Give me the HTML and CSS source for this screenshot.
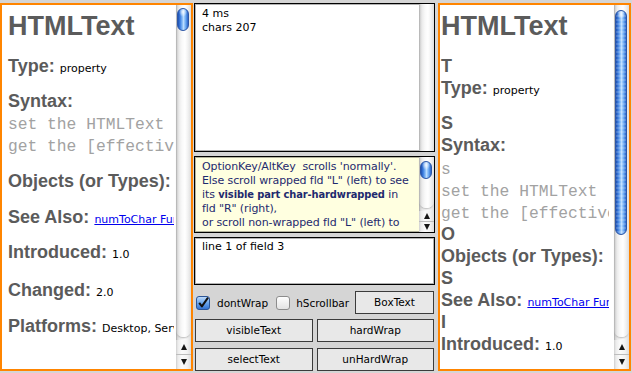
FILE: index.html
```html
<!DOCTYPE html>
<html>
<head>
<meta charset="utf-8">
<title>HTMLText</title>
<link rel="stylesheet" href="styles.css">
</head>
<body>
<div class="win">
  <section class="panel left">
    <div class="doc">
      <div class="title">HTMLText</div>
      <div class="ln g13">Type: <span class="v">property</span></div>
      <div class="ln g13">Syntax:</div>
      <div class="ln mono">set the HTMLText of object to htmlString</div>
      <div class="ln mono">get the [effective] HTMLText of object</div>
      <div class="ln g14">Objects (or Types):</div>
      <div class="ln g14">See Also: <span class="lk">numToChar Function</span></div>
      <div class="ln g13">Introduced: <span class="v">1.0</span></div>
      <div class="ln g16">Changed: <span class="v">2.0</span></div>
      <div class="ln g14">Platforms: <span class="v">Desktop, Server</span></div>
    </div>
    <div class="vsb">
      <div class="trk"><div class="thumb t-left"></div></div>
      <div class="arrows"><span class="up"></span><span class="dn"></span></div>
    </div>
  </section>

  <div class="center">
    <div class="fld top">
      <div class="ftext">4 ms<br>chars 207</div>
      <div class="vsb off"><div class="trk"></div></div>
    </div>
    <div class="fld note">
      <div class="ftext">OptionKey/AltKey&nbsp; scrolls 'normally'.<br>Else scroll wrapped fld "L" (left) to see<br>its <b>visible part char-hardwrapped</b> in<br>fld "R" (right),<br>or scroll non-wrapped fld "L" (left) to</div>
      <div class="vsb">
        <div class="trk"><div class="thumb t-note"></div></div>
        <div class="arrows small"><span class="up"></span><span class="dn"></span></div>
      </div>
    </div>
    <div class="fld f3">
      <div class="ftext">line 1 of field 3</div>
    </div>
    <div class="checkrow">
      <svg class="cb" width="14" height="14" viewBox="0 0 14 14">
        <defs>
          <linearGradient id="cbOn" x1="0" y1="0" x2="0" y2="1">
            <stop offset="0" stop-color="#c4defa"/>
            <stop offset="0.5" stop-color="#6aa6ec"/>
            <stop offset="1" stop-color="#2e6fd2"/>
          </linearGradient>
        </defs>
        <rect x="0.5" y="0.5" width="13" height="13" rx="2.5" fill="url(#cbOn)" stroke="#2b5597"/>
        <path d="M3.2 6.8 L5.9 10.4 L12 1.6" fill="none" stroke="#111" stroke-width="2" stroke-linejoin="round"/>
      </svg>
      <span class="lbl l1">dontWrap</span>
      <svg class="cb c2" width="14" height="14" viewBox="0 0 14 14">
        <defs>
          <linearGradient id="cbOff" x1="0" y1="0" x2="0" y2="1">
            <stop offset="0" stop-color="#ffffff"/>
            <stop offset="1" stop-color="#e2e2e2"/>
          </linearGradient>
        </defs>
        <rect x="0.5" y="0.5" width="13" height="13" rx="2.5" fill="url(#cbOff)" stroke="#8c8c8c"/>
      </svg>
      <span class="lbl l2">hScrollbar</span>
      <div class="btn boxtext">BoxText</div>
    </div>
    <div class="btnrow r1">
      <div class="btn">visibleText</div>
      <div class="btn">hardWrap</div>
    </div>
    <div class="btnrow r2">
      <div class="btn">selectText</div>
      <div class="btn">unHardWrap</div>
    </div>
  </div>

  <section class="panel right">
    <div class="doc">
      <div class="title">HTMLText</div>
      <div class="ln g13">T</div>
      <div class="ln">Type: <span class="v">property</span></div>
      <div class="ln g13">S</div>
      <div class="ln">Syntax:</div>
      <div class="ln mono g1">s</div>
      <div class="ln mono">set the HTMLText</div>
      <div class="ln mono">get the [effective]</div>
      <div class="ln">O</div>
      <div class="ln">Objects (or Types):</div>
      <div class="ln">S</div>
      <div class="ln">See Also: <span class="lk">numToChar Function</span></div>
      <div class="ln">I</div>
      <div class="ln">Introduced: <span class="v">1.0</span></div>
    </div>
    <div class="vsb">
      <div class="trk"><div class="thumb t-right"></div></div>
      <div class="arrows"><span class="up"></span><span class="dn"></span></div>
    </div>
  </section>
</div>
</body>
</html>
```

FILE: styles.css
```css
* { box-sizing: border-box; }
html, body { margin: 0; padding: 0; }
body {
  width: 632px;
  height: 373px;
  overflow: hidden;
  background: #d5d5d5;
  font-family: "DejaVu Sans", "Noto Sans", sans-serif;
  font-size: 11px;
  color: #000;
}
.win {
  display: flex;
  align-items: flex-start;
  padding-top: 3px;
  height: 373px;
}

/* ---------- orange doc panels ---------- */
.panel {
  width: 193px;
  height: 368px;
  border: 2px solid #ff8500;
  background: #fff;
  display: flex;
  flex: none;
}
.right { margin-left: 3px; }
.doc {
  flex: 1;
  min-width: 0;
  overflow: hidden;
  white-space: nowrap;
  color: #5b5b5b;
  padding-left: 6px;
  margin-right: 2px;
}
.right .doc { padding-left: 1px; margin-right: 5px; }
.title {
  font: bold 27px/32px "Liberation Sans", Arial, sans-serif;
  margin-top: 5px;
  height: 32px;
}
.ln {
  height: 22px;
  font: bold 18px/22px "Liberation Sans", Arial, sans-serif;
}
.v {
  font: 11px/12px "DejaVu Sans", sans-serif;
  color: #000;
}
.lk {
  font: 11px/12px "DejaVu Sans", sans-serif;
  color: #0000ee;
  text-decoration: underline;
}
.mono {
  font: 16.3px/18px "Liberation Mono", "Courier New", monospace;
  padding-top: 4px;
  color: #a2a2a2;
}
.g1 { margin-top: 1px; }
.g13 { margin-top: 13px; }
.g14 { margin-top: 14px; }
.g16 { margin-top: 16px; }

/* ---------- aqua scrollbars ---------- */
.vsb {
  width: 15px;
  flex: none;
  display: flex;
  flex-direction: column;
  background: linear-gradient(to right, #9d9d9d 0, #cdcdcd 1px, #e8e8e8 3px, #f7f7f7 6px, #fdfdfd 9px, #efefef 12px, #dcdcdc 15px);
}
.trk {
  flex: 1;
  padding-top: 3px;
  border-radius: 0 0 7px 7px;
  background: linear-gradient(to right, #a3a3a3 0, #d0d0d0 1px, #ebebeb 3px, #f9f9f9 6px, #ffffff 9px, #f1f1f1 12px, #dedede 15px);
  box-shadow: 0 2px 2px -1px rgba(0, 0, 0, 0.28);
}
.off .trk { box-shadow: none; border-radius: 0; }
.thumb {
  margin: 0 2px 0 1px;
  border-radius: 6px;
  border: 1px solid #2c56a6;
  background:
    radial-gradient(ellipse 40% 5px at 50% 3px, rgba(255,255,255,0.85), rgba(255,255,255,0) 100%),
    linear-gradient(to right, #1f4fae 0, #3d80e2 22%, #8ec0f7 45%, #b9dcff 55%, #66a6f1 78%, #2a62c8 100%);
}
.t-left { height: 23px; }
.t-note { height: 18px; margin-top: 1px; }
.t-right {
  height: 225px;
  margin-top: 2px;
  background:
    radial-gradient(ellipse 40% 5px at 50% 3px, rgba(255,255,255,0.85), rgba(255,255,255,0) 100%),
    repeating-linear-gradient(to bottom, rgba(255,255,255,0.16) 0 2px, rgba(255,255,255,0) 2px 4px),
    linear-gradient(to right, #1f4fae 0, #3d80e2 22%, #8ec0f7 45%, #b9dcff 55%, #66a6f1 78%, #2a62c8 100%);
}
.arrows { flex: none; margin-top: 3px; }
.arrows span {
  display: flex;
  align-items: center;
  justify-content: center;
  height: 14px;
  background: linear-gradient(to right, #cfcfcf 0, #ececec 2px, #fbfbfb 6px, #f3f3f3 11px, #dedede 15px);
}
.arrows .dn { border-top: 1px solid #bdbdbd; height: 15px; }
.arrows.small span { height: 10px; }
.arrows.small .dn { height: 11px; }
.arrows .up::after {
  content: "";
  border-left: 3.5px solid transparent;
  border-right: 3.5px solid transparent;
  border-bottom: 6px solid #161616;
}
.arrows .dn::after {
  content: "";
  border-left: 3.5px solid transparent;
  border-right: 3.5px solid transparent;
  border-top: 6px solid #161616;
}

/* ---------- center column ---------- */
.center {
  width: 241px;
  margin-left: 1px;
  flex: none;
  display: flex;
  flex-direction: column;
}
.fld {
  border: 1px solid #000;
  box-shadow: inset 0 0 0 1px rgba(0, 0, 0, 0.3);
  background: #fff;
  display: flex;
}
.top { height: 149px; }
.note { height: 77px; margin-top: 4px; background: #ffffe0; }
.f3 { height: 48px; margin-top: 4px; }
.ftext {
  flex: 1;
  min-width: 0;
  overflow: hidden;
  white-space: nowrap;
  padding: 3px 0 0 7px;
  line-height: 14px;
}
.note .ftext { color: #1e2a6e; letter-spacing: -0.1px; }
.note b {
  font-family: "DejaVu Sans Condensed", "DejaVu Sans", sans-serif;
  font-stretch: condensed;
  letter-spacing: -0.1px;
}
.f3 .ftext { padding-top: 2px; }

.checkrow {
  display: flex;
  align-items: center;
  height: 23px;
  margin-top: 6px;
}
.cb { flex: none; margin-left: 2px; }
.c2 { margin-left: 8px; }
.lbl { font-size: 10.5px; }
.l1 { margin-left: 7px; }
.l2 { margin-left: 6px; }
.btn {
  border: 1px solid #3b3b3b;
  background: #e8e8e8;
  height: 23px;
  line-height: 21px;
  text-align: center;
  font-size: 10.5px;
  color: #000;
}
.boxtext { width: 79px; margin-left: auto; margin-right: 1px; }
.btnrow {
  display: grid;
  grid-template-columns: 1fr 1fr;
  column-gap: 4px;
  margin: 0 1px;
}
.r1 { margin-top: 5px; }
.r2 { margin-top: 6px; }
```
